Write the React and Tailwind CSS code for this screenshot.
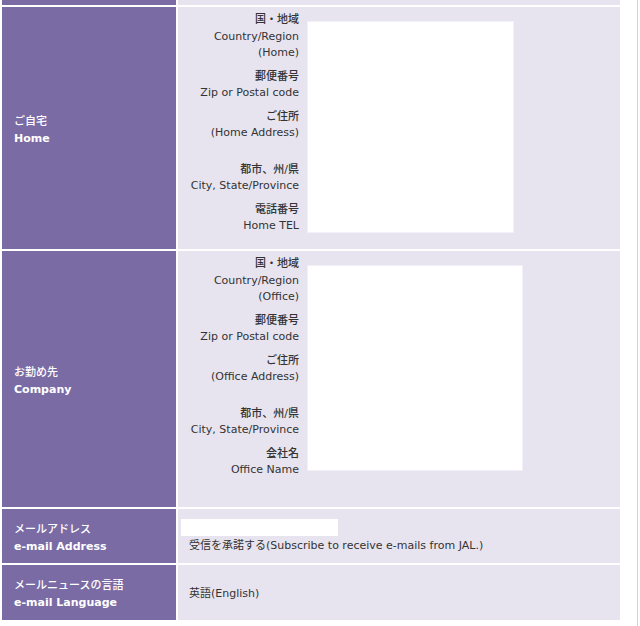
import React from "react";

const FONT = {
  fontFamily: '"DejaVu Sans", "Noto Sans CJK JP", sans-serif',
};

const Group = ({ ja, en, extra }) => (
  <div className="mb-[7px]">
    <div className="font-medium">{ja}</div>
    {en.map((line) => (
      <div key={line}>{line}</div>
    ))}
    {extra && <div className="h-[13px]" />}
  </div>
);

const AddressCell = ({ groups, boxW, boxH }) => (
  <div className="flex bg-[#e7e4ef] text-[#333]">
    <div className="w-[121px] pt-[5px] text-right text-[11px] leading-[16.5px]">
      {groups.map((g) => (
        <Group key={g.ja} {...g} />
      ))}
    </div>
    <div
      className={`mt-[14px] ml-[8px] bg-white border border-[#f3f1f8] ${boxW} ${boxH}`}
    />
  </div>
);

const Label = ({ ja, en }) => (
  <div className="flex flex-col justify-center bg-[#7a6ba5] pl-[12px] pt-[3px] text-[11px] leading-[17px] text-white">
    <div className="font-medium">{ja}</div>
    <div className="font-bold">{en}</div>
  </div>
);

const homeGroups = [
  { ja: "国・地域", en: ["Country/Region", "(Home)"] },
  { ja: "郵便番号", en: ["Zip or Postal code"] },
  { ja: "ご住所", en: ["(Home Address)"], extra: true },
  { ja: "都市、州/県", en: ["City, State/Province"] },
  { ja: "電話番号", en: ["Home TEL"] },
];

const officeGroups = [
  { ja: "国・地域", en: ["Country/Region", "(Office)"] },
  { ja: "郵便番号", en: ["Zip or Postal code"] },
  { ja: "ご住所", en: ["(Office Address)"], extra: true },
  { ja: "都市、州/県", en: ["City, State/Province"] },
  { ja: "会社名", en: ["Office Name"] },
];

export default function App() {
  return (
    <div className="min-h-screen bg-white" style={FONT}>
      <div className="w-[638px] min-h-[626px] border-r border-[#d4d4d4] pl-[2px]">
        <div className="w-[618px] flex flex-col gap-[2px]">
          {/* top row, cut off */}
          <div className="grid grid-cols-[174px_1fr] gap-[2px] h-[5px]">
            <div className="bg-[#7a6ba5]" />
            <div className="bg-[#e7e4ef]" />
          </div>

          {/* home */}
          <div className="grid grid-cols-[174px_1fr] gap-[2px] h-[242px]">
            <Label ja="ご自宅" en="Home" />
            <AddressCell groups={homeGroups} boxW="w-[207px]" boxH="h-[212px]" />
          </div>

          {/* company */}
          <div className="grid grid-cols-[174px_1fr] gap-[2px] h-[256px]">
            <Label ja="お勤め先" en="Company" />
            <AddressCell groups={officeGroups} boxW="w-[216px]" boxH="h-[206px]" />
          </div>

          {/* email */}
          <div className="grid grid-cols-[174px_1fr] gap-[2px] h-[54px]">
            <Label ja="メールアドレス" en="e-mail Address" />
            <div className="bg-[#e7e4ef] text-[11px] leading-[16.5px] text-[#333] pl-[3px] pt-[10px]">
              <div className="w-[157px] h-[17px] bg-white" />
              <div className="pl-[8px] pt-[2px]">
                受信を承諾する(Subscribe to receive e-mails from JAL.)
              </div>
            </div>
          </div>

          {/* language */}
          <div className="grid grid-cols-[174px_1fr] gap-[2px] h-[55px]">
            <Label ja="メールニュースの言語" en="e-mail Language" />
            <div className="flex items-center bg-[#e7e4ef] pl-[11px] pt-[3px] text-[11px] text-[#333]">
              英語(English)
            </div>
          </div>
        </div>
      </div>
    </div>
  );
}
